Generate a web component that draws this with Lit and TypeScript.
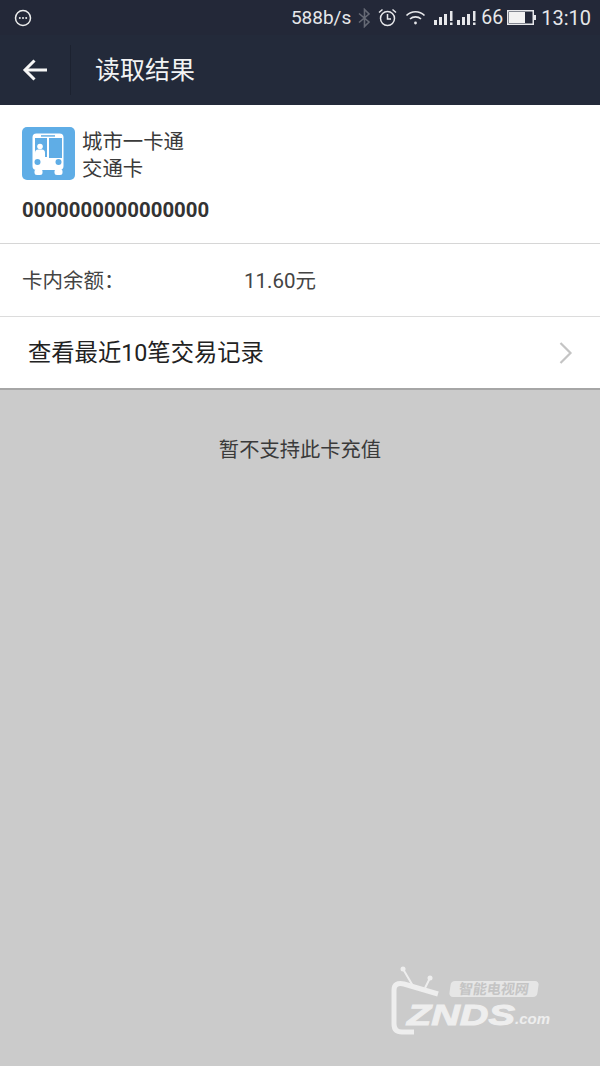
import { LitElement, html, css } from "lit";
import { customElement } from "lit/decorators.js";

@customElement("app-root")
export class AppRoot extends LitElement {
  static styles = css`
    :host { display: block; width: 600px; height: 1066px; position: relative; overflow: hidden; background: #cbcbcb;
      font-family: Roboto, "Noto Sans CJK SC", sans-serif; color: #333; }
    .status { height: 35px; background: #232838; display: flex; align-items: center; padding: 0 9px 0 14px; color: #e6e7ea; font-size: 19px; }
    .status .dots { margin-right: auto; display: block; }
    .status svg { display: block; flex: none; }
    .speed { margin-right: 7px; }
    .bt { margin-right: 7px; }
    .alarm { margin-right: 8px; }
    .wifi { margin-right: 8px; }
    .sig { margin-right: 2px; }
    .num { margin: 0 4px 0 1px; font-size: 19.500px; }
    .batt { margin-right: 5px; }
    .time { font-size: 20px; }
    .nav { height: 70px; background: #232a3a; display: flex; align-items: center; color: #f2f3f4; }
    .back { width: 71px; height: 50px; flex: none; display: flex; align-items: center; justify-content: center; padding-right: 1px; border-right: 1px solid #1c2230; box-sizing: border-box; }
    .title { font-size: 25px; margin-left: 24px; line-height: 1; }
    .card { background: #fff; height: 139px; box-sizing: border-box; padding: 22px 22px 0; border-bottom: 1px solid #d6d6d6; }
    .head { display: flex; gap: 8px; }
    .logo { width: 53px; height: 53px; flex: none; display: block; }
    .names { font-size: 20.400px; line-height: 27px; color: #3a3a3a; margin-top: 2px; margin-left: -1px; }
    .cardno { font-size: 20.400px; font-weight: 700; margin-top: 14px; line-height: 26px; color: #333; }
    .bal { background: #fff; height: 73px; box-sizing: border-box; display: flex; align-items: center; padding: 0 22px 3px; border-bottom: 1px solid #dcdcdc; font-size: 20.500px; color: #444; }
    .bal .lbl { width: 222px; }
    .link { background: #fff; height: 73px; box-sizing: border-box; display: flex; align-items: center; justify-content: space-between; padding: 0 27px 4px 28px; border-bottom: 2px solid #a6a6a6; font-size: 23.300px; color: #222; }
    .chev { margin-top: 4px; }
    .note { text-align: center; font-size: 20.300px; color: #3a3a3a; margin-top: 46px; line-height: 28px; }
    .mark { position: absolute; left: 390px; top: 966px; width: 165px; height: 70px; color: #eeeeee; }
    .mark svg { position: absolute; left: 0; top: 0; }
    .cn { position: absolute; left: 60px; top: 15px; width: 88px; height: 16px; background: #e6e6e6; color: #c4c4c4; border-radius: 4px; transform: skewX(-8deg);
      font-size: 14px; font-weight: 700; line-height: 16px; text-align: center; white-space: nowrap; }
    .znds { position: absolute; left: 17px; top: 34px; font-family: "Liberation Sans", sans-serif; font-size: 30px; font-weight: 700; font-style: italic; line-height: 30px; white-space: nowrap;
      transform: scaleX(1.32); transform-origin: left center; -webkit-text-stroke: 1px #eeeeee; }
    .com { position: absolute; left: 125px; top: 44px; font-family: "Liberation Sans", sans-serif; font-size: 15px; font-weight: 700; font-style: italic; line-height: 18px; white-space: nowrap; }
  `;

  render() {
    return html`
      <div class="status">
        <svg class="dots" width="18" height="18" viewBox="0 0 18 18" fill="none"><circle cx="9" cy="9" r="7.500" stroke="#eceded" stroke-width="1.500"/><circle cx="5.800" cy="9" r="1" fill="#eceded"/><circle cx="9" cy="9" r="1" fill="#eceded"/><circle cx="12.200" cy="9" r="1" fill="#eceded"/></svg>
        <span class="speed">588b/s</span>
        <svg class="bt" width="13" height="20" viewBox="0 0 13 20" fill="none" stroke="#666a75" stroke-width="1.600"><path d="M1 5.500 11 14 6.500 18.500V1.500L11 6 1 14.500"/></svg>
        <svg class="alarm" width="19" height="19" viewBox="0 0 19 19" fill="none" stroke="#e6e7ea" stroke-width="1.500"><circle cx="9.500" cy="10.500" r="7"/><path d="M9.500 6v5h3.500"/><path d="M1 4.500 4.500 1.500M18 4.500 14.500 1.500"/></svg>
        <svg class="wifi" width="21" height="17" viewBox="0 0 21 17" fill="none" stroke="#e6e7ea" stroke-width="1.700"><path d="M1.500 6.500C6.500 1.500 14.500 1.500 19.500 6.500"/><path d="M5 10C8 7.200 13 7.200 16 10"/><circle cx="10.500" cy="14" r="1.400" fill="#e6e7ea" stroke="none"/></svg>
        <svg class="sig" width="21" height="16" viewBox="0 0 21 16" fill="#e6e7ea"><rect x="0" y="10" width="3" height="5"/><rect x="5" y="7" width="3" height="8"/><rect x="10" y="4" width="3" height="11"/><rect x="16" y="1" width="2.500" height="10"/><rect x="16" y="12.500" width="2.500" height="2.500"/></svg>
        <svg class="sig" width="21" height="16" viewBox="0 0 21 16" fill="#e6e7ea"><rect x="0" y="10" width="3" height="5"/><rect x="5" y="7" width="3" height="8"/><rect x="10" y="4" width="3" height="11"/><rect x="16" y="1" width="2.500" height="10"/><rect x="16" y="12.500" width="2.500" height="2.500"/></svg>
        <span class="num">66</span>
        <svg class="batt" width="29" height="15" viewBox="0 0 29 15"><rect x="0.750" y="0.750" width="25.500" height="13.500" fill="none" stroke="#e6e7ea" stroke-width="1.500"/><rect x="2" y="2" width="16" height="11" fill="#f2f2f2"/><rect x="27" y="5" width="2" height="5" fill="#e6e7ea"/></svg>
        <span class="time">13:10</span>
      </div>
      <div class="nav">
        <div class="back">
          <svg width="26" height="22" viewBox="0 0 26 22" fill="none" stroke="#f6f6f6" stroke-width="3"><path d="M25 11H3"/><path d="M12.500 1.500 3 11l9.500 9.500"/></svg>
        </div>
        <div class="title">读取结果</div>
      </div>
      <div class="card">
        <div class="head">
          <svg class="logo" viewBox="0 0 53 53">
            <rect width="53" height="53" rx="5" fill="#5fade6"/>
            <rect x="10.500" y="6.500" width="31" height="36.500" rx="4" fill="#fff"/>
            <rect x="19" y="8" width="14" height="1.800" fill="#7fbdea"/>
            <rect x="13" y="11" width="12" height="19" fill="#5fade6"/>
            <rect x="27" y="11" width="13" height="20" fill="#5fade6"/>
            <circle cx="18" cy="19.500" r="2.800" fill="#fff"/>
            <path d="M13 31v-5q0-3.500 3-3.500h4q3 0 3 3.500v5z" fill="#fff"/>
            <circle cx="15.500" cy="35" r="3" fill="#5fade6"/><circle cx="36.500" cy="35" r="3" fill="#5fade6"/>
            <rect x="12.500" y="42" width="8" height="6" rx="2.500" fill="#fff"/><rect x="32.500" y="42" width="8" height="6" rx="2.500" fill="#fff"/>
          </svg>
          <div class="names"><div>城市一卡通</div><div>交通卡</div></div>
        </div>
        <div class="cardno">0000000000000000</div>
      </div>
      <div class="bal"><span class="lbl">卡内余额：</span><span>11.60元</span></div>
      <div class="link">
        <span>查看最近10笔交易记录</span>
        <svg class="chev" width="14" height="24" viewBox="0 0 14 24" fill="none" stroke="#c4c4c4" stroke-width="2.200"><path d="M1.500 2 11.500 12 1.500 22"/></svg>
      </div>
      <div class="note">暂不支持此卡充值</div>
      <div class="mark">
        <svg width="60" height="70" viewBox="0 0 60 70" fill="none" stroke="#eeeeee">
          <path d="M13 3 23 20M40 12 35 22" stroke-width="2"/>
          <circle cx="13" cy="3" r="2.500" fill="#eeeeee" stroke="none"/><circle cx="40" cy="12" r="2.500" fill="#eeeeee" stroke="none"/>
          <path d="M48 28 14 18Q4 16 4 24V58Q4 66 12 66L24 66" stroke-width="5"/>
        </svg>
        <div class="cn">智能电视网</div>
        <div class="znds">ZNDS</div>
        <div class="com">.com</div>
      </div>
    `;
  }
}
